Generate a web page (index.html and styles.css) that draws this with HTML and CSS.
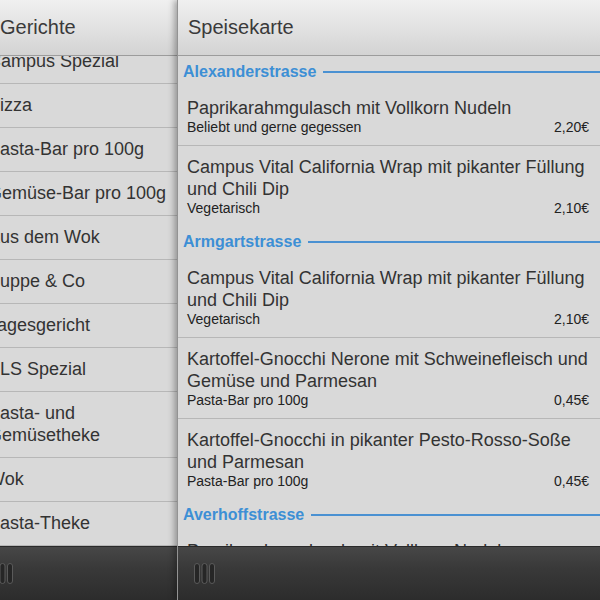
FILE: index.html
```html
<!DOCTYPE html>
<html lang="de">
<head>
<meta charset="utf-8">
<title>Speisekarte</title>
<link rel="stylesheet" href="styles.css">
</head>
<body>
<div class="app">
  <section class="panel panel-left">
    <header class="bar-top"><h1 class="title title-left">Gerichte</h1></header>
    <div class="content">
      <ul class="cats">
        <li class="cat">Campus Spezial</li>
        <li class="cat">Pizza</li>
        <li class="cat">Pasta-Bar pro 100g</li>
        <li class="cat">Gemüse-Bar pro 100g</li>
        <li class="cat">Aus dem Wok</li>
        <li class="cat">Suppe &amp; Co</li>
        <li class="cat">Tagesgericht</li>
        <li class="cat">ELS Spezial</li>
        <li class="cat">Pasta- und<br>Gemüsetheke</li>
        <li class="cat">Wok</li>
        <li class="cat">Pasta-Theke</li>
        <li class="cat">Salat-Bar</li>
      </ul>
    </div>
    <footer class="bar-bottom">
      <svg class="tb-icon" width="21" height="21" viewBox="0 0 21 21"><rect x="0.5" y="0.5" width="5" height="20" rx="2.5"/><rect x="8" y="0.5" width="5" height="20" rx="2.5"/><rect x="15.5" y="0.5" width="5" height="20" rx="2.5"/></svg>
    </footer>
  </section>
  <section class="panel panel-right">
    <header class="bar-top"><h1 class="title">Speisekarte</h1></header>
    <div class="content">
      <h2 class="loc">Alexanderstrasse</h2>
      <div class="dish">
        <div class="dish-name">Paprikarahmgulasch mit Vollkorn Nudeln</div>
        <div class="dish-meta"><span>Beliebt und gerne gegessen</span><span>2,20€</span></div>
      </div>
      <div class="dish">
        <div class="dish-name">Campus Vital California Wrap mit pikanter Füllung und Chili Dip</div>
        <div class="dish-meta"><span>Vegetarisch</span><span>2,10€</span></div>
      </div>
      <h2 class="loc">Armgartstrasse</h2>
      <div class="dish">
        <div class="dish-name">Campus Vital California Wrap mit pikanter Füllung und Chili Dip</div>
        <div class="dish-meta"><span>Vegetarisch</span><span>2,10€</span></div>
      </div>
      <div class="dish">
        <div class="dish-name">Kartoffel-Gnocchi Nerone mit Schweinefleisch und Gemüse und Parmesan</div>
        <div class="dish-meta"><span>Pasta-Bar pro 100g</span><span>0,45€</span></div>
      </div>
      <div class="dish">
        <div class="dish-name">Kartoffel-Gnocchi in pikanter Pesto-Rosso-Soße und Parmesan</div>
        <div class="dish-meta"><span>Pasta-Bar pro 100g</span><span>0,45€</span></div>
      </div>
      <h2 class="loc">Averhoffstrasse</h2>
      <div class="dish">
        <div class="dish-name">Paprikarahmgulasch mit Vollkorn Nudeln</div>
        <div class="dish-meta"><span>Beliebt und gerne gegessen</span><span>2,20€</span></div>
      </div>
    </div>
    <footer class="bar-bottom">
      <svg class="tb-icon" width="21" height="21" viewBox="0 0 21 21"><rect x="0.5" y="0.5" width="5" height="20" rx="2.5"/><rect x="8" y="0.5" width="5" height="20" rx="2.5"/><rect x="15.5" y="0.5" width="5" height="20" rx="2.5"/></svg>
    </footer>
  </section>
</div>
</body>
</html>
```
FILE: styles.css
```css
* { box-sizing: border-box; }
html, body { margin: 0; padding: 0; }
body {
  width: 600px;
  height: 600px;
  overflow: hidden;
  background: #d9d9d9;
  font-family: "Liberation Sans", Arial, sans-serif;
  color: #333;
}
.app {
  display: flex;
  height: 600px;
  margin-left: -24px;
}
.panel {
  display: flex;
  flex-direction: column;
  height: 600px;
  background: #d9d9d9;
}
.panel-left { width: 201px; flex: none; }
.panel-right {
  flex: 1;
  position: relative;
  z-index: 1;
  box-shadow: -3px 0 6px rgba(0, 0, 0, 0.3);
  border-left: 1px solid #939393;
}
.bar-top {
  height: 56px;
  flex: none;
  background: linear-gradient(#f0f0f0, #e2e2e2 50%, #d3d3d3);
  border-bottom: 1px solid #9c9c9c;
}
.title {
  margin: 0;
  font-size: 20px;
  font-weight: normal;
  line-height: 55px;
  padding-left: 10px;
  color: #3a3a3a;
}
.title-left { padding-left: 24px; }
.content {
  flex: 1;
  overflow: hidden;
}
.cats {
  list-style: none;
  margin: -16px 0 0;
  padding: 0;
}
.cat {
  font-size: 18px;
  line-height: 22px;
  padding: 10px 2px 11px 12px;
  border-bottom: 1px solid #b7b7b7;
  color: #333;
  white-space: nowrap;
}
.loc {
  display: flex;
  align-items: center;
  gap: 7px;
  height: 31px;
  margin: 0;
  padding-left: 5px;
  font-size: 16px;
  font-weight: bold;
  color: #3d8fd5;
}
.loc::after {
  content: "";
  flex: 1;
  height: 2px;
  background: #4a91d2;
}
.dish {
  padding: 10px 11px 10px 9px;
  border-bottom: 1px solid #b7b7b7;
}
.dish:has(+ .loc), .dish:last-child { border-bottom: none; }
.dish-name {
  font-size: 18px;
  line-height: 22px;
  color: #333;
}
.dish-meta {
  display: flex;
  justify-content: space-between;
  font-size: 14px;
  line-height: 16px;
  color: #222;
}
.bar-bottom {
  height: 54px;
  flex: none;
  display: flex;
  align-items: center;
  padding-left: 16px;
  background: linear-gradient(#474747, #393939 40%, #2c2c2c);
  border-top: 1px solid #2a2a2a;
}
.tb-icon rect {
  fill: #262626;
  stroke: #5a5a5a;
  stroke-width: 1;
}
```
